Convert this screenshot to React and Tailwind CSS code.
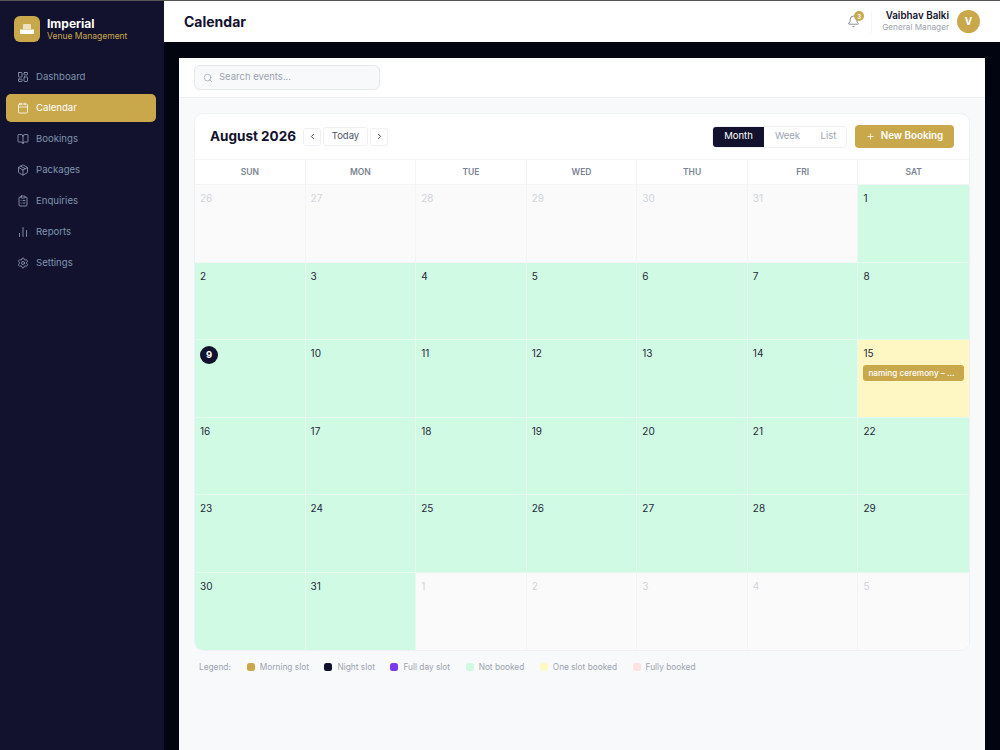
import React from 'react';
import { LayoutDashboard, Calendar, BookOpen, Package, ClipboardList, ChartNoAxesColumn, Settings, Bell, Search, ChevronLeft, ChevronRight, Plus } from 'lucide-react';

const navItems = [
  { label: 'Dashboard', icon: LayoutDashboard },
  { label: 'Calendar', icon: Calendar, active: true },
  { label: 'Bookings', icon: BookOpen },
  { label: 'Packages', icon: Package },
  { label: 'Enquiries', icon: ClipboardList },
  { label: 'Reports', icon: ChartNoAxesColumn },
  { label: 'Settings', icon: Settings },
];

const days = ['SUN', 'MON', 'TUE', 'WED', 'THU', 'FRI', 'SAT'];

const cells = [
  ...[26, 27, 28, 29, 30, 31].map((d) => ({ d, out: true })),
  ...Array.from({ length: 31 }, (_, i) => ({ d: i + 1 })),
  ...[1, 2, 3, 4, 5].map((d) => ({ d, out: true })),
];

const legend = [
  { label: 'Morning slot', color: 'bg-[#c9a84c]' },
  { label: 'Night slot', color: 'bg-[#12122e]' },
  { label: 'Full day slot', color: 'bg-[#7c3aed]' },
  { label: 'Not booked', color: 'bg-[#d1fae5]' },
  { label: 'One slot booked', color: 'bg-[#fef9c3]' },
  { label: 'Fully booked', color: 'bg-[#fee2e2]' },
];

const Sidebar = () => (
  <aside className="w-[164px] shrink-0 bg-[#12122e] flex flex-col">
    <div className="flex items-center gap-[7px] pl-[14px] pt-[15px] pb-[21px]">
      <div className="w-[26px] h-[26px] rounded-[6px] bg-[#c9a84c] flex items-center justify-center">
        <svg width="14" height="10" viewBox="0 0 14 10" fill="white">
          <path d="M3 1a1 1 0 0 1 1-1h6a1 1 0 0 1 1 1v4H3z" fillOpacity="0.65" />
          <path d="M0 5.5h14V9a1 1 0 0 1-1 1H1a1 1 0 0 1-1-1z" />
        </svg>
      </div>
      <div>
        <div className="text-[12px] leading-[15px] font-bold text-white">Imperial</div>
        <div className="text-[8.5px] leading-[11px] text-[#c9a84c]">Venue Management</div>
      </div>
    </div>
    <nav className="flex flex-col gap-[3px] pl-[6px] pr-[8px]">
      {navItems.map(({ label, icon: Icon, active }) => (
        <div
          key={label}
          className={`h-[28px] flex items-center gap-[7px] pl-[11px] rounded-[5px] text-[9.6px] ${
            active ? 'bg-[#c9a84c] text-white' : 'text-[#7f93ad]'
          }`}
        >
          <Icon size={12} strokeWidth={1.5} className={active ? 'text-white' : 'text-[#a0aec0]'} />
          {label}
        </div>
      ))}
    </nav>
  </aside>
);

const Topbar = () => (
  <header className="h-[41px] shrink-0 bg-white flex items-center justify-between pl-[20px] pr-[20px]">
    <h1 className="text-[14px] font-bold text-[#12122e]">Calendar</h1>
    <div className="flex items-center">
      <div className="relative mr-[11px] text-[#6b7280]">
        <Bell size={13} strokeWidth={1.5} />
        <span className="absolute -top-[4px] -right-[4px] w-[10px] h-[10px] rounded-full bg-[#c9a84c] text-white text-[6px] font-bold flex items-center justify-center">3</span>
      </div>
      <div className="border-l border-gray-100 h-[22px] mr-[10px]" />
      <div className="text-right mr-[8px]">
        <div className="text-[9.8px] leading-[12px] font-semibold text-[#12122e]">Vaibhav Balki</div>
        <div className="text-[8.2px] leading-[11px] text-[#9ca3af]">General Manager</div>
      </div>
      <div className="w-[23px] h-[23px] rounded-full bg-[#c9a84c] text-white text-[10px] font-bold flex items-center justify-center">V</div>
    </div>
  </header>
);

const DayCell = ({ d, out }) => {
  const isToday = !out && d === 9;
  const isEvent = !out && d === 15;
  const bg = out
    ? 'bg-[#fafafa] border-[#f3f4f6]'
    : isEvent
      ? 'bg-[#fef6c3] border-[#e6f9ee]'
      : 'bg-[#d1fae5] border-[#e6f9ee]';
  return (
    <div className={`${bg} border-r border-b px-[5px] pt-[7px] overflow-hidden min-w-0 [&:nth-child(7n)]:border-r-0 [&:nth-last-child(-n+7)]:border-b-0`}>
      {isToday ? (
        <div className="w-[18px] h-[18px] -mt-[1px] rounded-full bg-[#12122e] text-white text-[9.5px] font-bold flex items-center justify-center">{d}</div>
      ) : (
        <div className={`text-[10px] leading-[13px] ${out ? 'text-[#d1d5db]' : 'text-[#1f2937]'}`}>{d}</div>
      )}
      {isEvent && (
        <div className="mt-[5px] h-[16px] rounded-[3px] bg-[#c9a84c] text-white text-[8.2px] font-medium leading-[16px] px-[5px] truncate">naming ceremony – ...</div>
      )}
    </div>
  );
};

export default function App() {
  return (
    <div className="w-full h-[750px] overflow-hidden flex bg-[#02040f] border-t border-[#555] font-['Inter',sans-serif]">
      <Sidebar />
      <div className="flex-1 min-w-0 flex flex-col">
        <Topbar />
        <div className="flex-1 min-h-0 pt-[16px] pl-[15px] pr-[15px]">
          <div className="h-full bg-[#f8f9fb] flex flex-col">
            <div className="h-[40px] shrink-0 bg-white border-b border-[#eef0f3] flex items-center pl-[15px]">
              <div className="w-[186px] h-[25px] rounded-[6px] bg-[#f8f9fb] border border-[#e5e7eb] flex items-center gap-[6px] pl-[8px]">
                <Search size={10} strokeWidth={1.5} className="text-[#8a94a6]" />
                <span className="text-[9.5px] text-[#9ca3af]">Search events...</span>
              </div>
            </div>
            <div className="px-[15px] pt-[15px]">
              <div className="bg-white rounded-[9px] border border-[#eef0f3] overflow-hidden">
                <div className="h-[45px] flex items-center justify-between pl-[15px] pr-[15px]">
                  <div className="flex items-center">
                    <span className="text-[13.5px] font-bold text-[#12122e] mr-[7px]">August 2026</span>
                    <button className="w-[18px] h-[18px] rounded-[3px] border border-[#eef0f3] flex items-center justify-center text-[#374151]"><ChevronLeft size={9} strokeWidth={2.5} /></button>
                    <button className="ml-[2px] w-[45px] h-[19px] rounded-[3px] border border-[#eef0f3] text-[9.5px] text-[#4b5563]">Today</button>
                    <button className="ml-[2px] w-[18px] h-[18px] rounded-[3px] border border-[#eef0f3] flex items-center justify-center text-[#374151]"><ChevronRight size={9} strokeWidth={2.5} /></button>
                  </div>
                  <div className="flex items-center gap-[8px]">
                    <div className="h-[22px] flex rounded-[4px] border border-[#eef0f3] overflow-hidden text-[9.5px]">
                      <span className="w-[51px] bg-[#12122e] text-white flex items-center justify-center">Month</span>
                      <span className="w-[47px] text-[#9ca3af] flex items-center justify-center">Week</span>
                      <span className="w-[35px] text-[#9ca3af] flex items-center justify-center">List</span>
                    </div>
                    <button className="w-[99px] h-[23px] rounded-[4px] bg-[#c9a84c] text-white text-[9.8px] font-semibold flex items-center justify-center gap-[6px]">
                      <Plus size={9} />New Booking
                    </button>
                  </div>
                </div>
                <div className="grid grid-cols-7 h-[26px] border-t border-b border-[#f3f4f6]">
                  {days.map((day) => (
                    <div key={day} className="flex items-center justify-center text-[8.5px] font-semibold text-[#7b8494] border-r border-[#f3f4f6] last:border-r-0">{day}</div>
                  ))}
                </div>
                <div className="grid grid-cols-7 grid-rows-[repeat(6,77.5px)]">
                  {cells.map((c, i) => (
                    <DayCell key={i} d={c.d} out={c.out} />
                  ))}
                </div>
              </div>
              <div className="flex items-center mt-[10px] pl-[5px] text-[8.3px] text-[#9ca3af]">
                <span className="mr-[16px]">Legend:</span>
                <div className="flex items-center gap-[15.6px]">
                  {legend.map((l) => (
                    <div key={l.label} className="flex items-center gap-[5px]">
                      <span className={`w-[8px] h-[8px] rounded-[2.5px] ${l.color}`} />
                      {l.label}
                    </div>
                  ))}
                </div>
              </div>
            </div>
          </div>
        </div>
      </div>
    </div>
  );
}
